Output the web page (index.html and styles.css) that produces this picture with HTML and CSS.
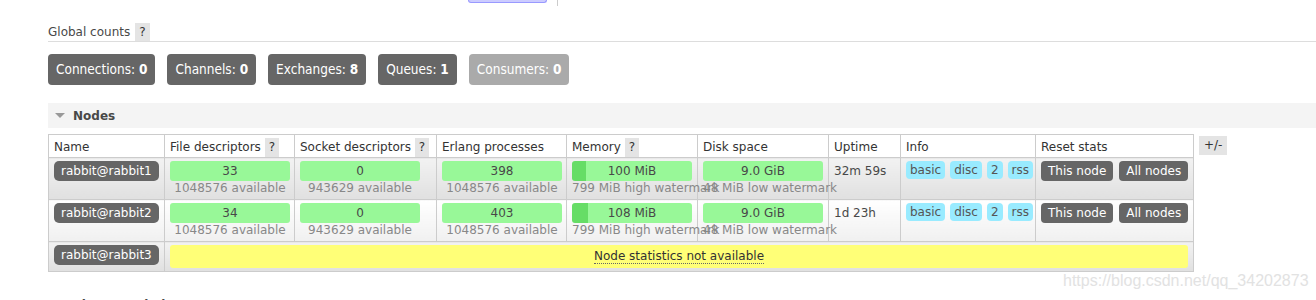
FILE: index.html
```html
<!DOCTYPE html>
<html lang="en">
<head>
    <meta charset="UTF-8">
    <title>RabbitMQ Management - Overview</title>
    <link rel="stylesheet" href="styles.css">
</head>
<body>
    <div class="topbar">
        <span class="tab-edge"></span>
        <span class="divider"></span>
    </div>

    <div class="main">
        <h3 class="counts-title">Global counts <span class="help">?</span></h3>
        <ul class="counts">
            <li>Connections: <b>0</b></li>
            <li>Channels: <b>0</b></li>
            <li>Exchanges: <b>8</b></li>
            <li>Queues: <b>1</b></li>
            <li class="off">Consumers: <b>0</b></li>
        </ul>

        <h2 class="section-head"><span class="arrow"></span>Nodes</h2>
        <div class="table-wrap">
            <table class="list">
                <colgroup>
                    <col style="width: 116px">
                    <col style="width: 130px">
                    <col style="width: 142px">
                    <col style="width: 130px">
                    <col style="width: 131px">
                    <col style="width: 131px">
                    <col style="width: 72px">
                    <col style="width: 135px">
                    <col style="width: 158px">
                </colgroup>
                <thead>
                    <tr>
                        <th>Name</th>
                        <th>File descriptors <span class="help">?</span></th>
                        <th>Socket descriptors <span class="help">?</span></th>
                        <th>Erlang processes</th>
                        <th>Memory <span class="help">?</span></th>
                        <th>Disk space</th>
                        <th>Uptime</th>
                        <th>Info</th>
                        <th>Reset stats</th>
                    </tr>
                </thead>
                <tbody>
                    <tr class="alt1">
                        <td><span class="node">rabbit@rabbit1</span></td>
                        <td><div class="stat"><div class="bar">33</div><span class="sub">1048576 available</span></div></td>
                        <td><div class="stat"><div class="bar">0</div><span class="sub">943629 available</span></div></td>
                        <td><div class="stat"><div class="bar">398</div><span class="sub">1048576 available</span></div></td>
                        <td><div class="stat"><div class="bar used" style="--used: 12%">100 MiB</div><span class="sub">799 MiB high watermark</span></div></td>
                        <td><div class="stat"><div class="bar">9.0 GiB</div><span class="sub">48 MiB low watermark</span></div></td>
                        <td class="uptime">32m 59s</td>
                        <td><div class="tags"><span>basic</span><span>disc</span><span>2</span><span>rss</span></div></td>
                        <td><div class="buttons"><span class="btn">This node</span><span class="btn">All nodes</span></div></td>
                    </tr>
                    <tr class="alt2">
                        <td><span class="node">rabbit@rabbit2</span></td>
                        <td><div class="stat"><div class="bar">34</div><span class="sub">1048576 available</span></div></td>
                        <td><div class="stat"><div class="bar">0</div><span class="sub">943629 available</span></div></td>
                        <td><div class="stat"><div class="bar">403</div><span class="sub">1048576 available</span></div></td>
                        <td><div class="stat"><div class="bar used" style="--used: 13.5%">108 MiB</div><span class="sub">799 MiB high watermark</span></div></td>
                        <td><div class="stat"><div class="bar">9.0 GiB</div><span class="sub">48 MiB low watermark</span></div></td>
                        <td class="uptime">1d 23h</td>
                        <td><div class="tags"><span>basic</span><span>disc</span><span>2</span><span>rss</span></div></td>
                        <td><div class="buttons"><span class="btn">This node</span><span class="btn">All nodes</span></div></td>
                    </tr>
                    <tr class="alt1">
                        <td><span class="node">rabbit@rabbit3</span></td>
                        <td colspan="8"><div class="unavailable"><abbr>Node statistics not available</abbr></div></td>
                    </tr>
                </tbody>
            </table>
            <span class="help toggle">+/-</span>
        </div>

        <h2 class="section-head closed"><span class="arrow"></span>Churn statistics</h2>
    </div>

    <div class="watermark">https://blog.csdn.net/qq_34202873</div>
</body>
</html>
```

FILE: styles.css
```css
body {
    margin: 0;
    font-family: "DejaVu Sans", Verdana, sans-serif;
    font-size: 12px;
    color: #484848;
    background: #fff;
}

/* bottom edge of the tab bar above */
.topbar {
    display: flex;
    align-items: flex-start;
    height: 6px;
    padding-left: 468px;
}

.topbar .tab-edge {
    width: 77px;
    height: 2px;
    background: #ccccff;
    border: 1px solid #9999ff;
    border-top: none;
    border-radius: 0 0 3px 3px;
}

.topbar .divider {
    width: 1px;
    height: 6px;
    margin-left: 10px;
    background: #ccc;
}

.main {
    padding-left: 48px;
}

.help {
    display: inline-block;
    padding: 0 4px;
    line-height: 19px;
    background: #e4e4e4;
    color: #333;
    font-weight: normal;
}

.counts-title {
    display: flex;
    align-items: center;
    gap: 5px;
    height: 19px;
    margin: 16px 0 0;
    font-size: 12px;
    font-weight: normal;
    border-bottom: 1px solid #ddd;
}

.counts-title .help {
    line-height: 18px;
}

.counts {
    display: flex;
    gap: 12px;
    list-style: none;
    margin: 12px 0 0;
    padding: 0;
}

.counts li {
    height: 31px;
    line-height: 31px;
    padding: 0 8px;
    background: #666;
    color: #fff;
    border-radius: 4px;
    font-family: "DejaVu Sans Condensed", "DejaVu Sans", sans-serif;
    font-stretch: condensed;
    font-size: 13.5px;
}

.counts li.off {
    background: #aaa;
}

.section-head {
    display: flex;
    align-items: center;
    gap: 8px;
    height: 25px;
    margin: 18px 0 0;
    padding-left: 7px;
    background: #f4f4f4;
    font-size: 12px;
    font-weight: bold;
    color: #484848;
}

.section-head .arrow {
    width: 0;
    height: 0;
    border-left: 5px solid transparent;
    border-right: 5px solid transparent;
    border-top: 5px solid #999;
}

.section-head.closed {
    margin-top: 20px;
    padding-left: 10px;
    gap: 10px;
    background: #fff;
}

.section-head.closed .arrow {
    border-top: 5px solid transparent;
    border-bottom: 5px solid transparent;
    border-left: 5px solid #999;
    border-right: none;
}

.table-wrap {
    display: flex;
    align-items: flex-start;
    gap: 5px;
    margin-top: 6px;
}

.table-wrap .toggle {
    margin-top: 2px;
    padding: 0 5px;
}

.list {
    border-collapse: collapse;
    table-layout: fixed;
    width: 1146px;
}

.list th,
.list td {
    border: 1px solid #ccc;
    padding: 3px 5px;
    text-align: left;
    vertical-align: top;
    white-space: nowrap;
}

.list th {
    padding: 2px 5px 0;
    line-height: 20px;
    font-weight: normal;
    color: #333;
    background: #fff;
}

.list tr.alt1 td {
    background: linear-gradient(#f2f2f2, #e0e0e0);
}

.list tr.alt2 td {
    background: linear-gradient(#fff, #f0f0f0);
}

.node {
    display: inline-block;
    padding: 0 7px;
    line-height: 20px;
    background: #666;
    color: #fff;
    border-radius: 5px;
}

.stat {
    width: 120px;
    text-align: center;
}

.bar {
    height: 20px;
    line-height: 20px;
    background: #98f898;
    border-radius: 3px;
}

.bar.used {
    background: linear-gradient(to right, #66dd66 var(--used), #98f898 var(--used));
}

.sub {
    display: block;
    line-height: 15px;
    color: #888;
}

.uptime {
    line-height: 20px;
}

.tags {
    display: flex;
    gap: 5px;
}

.tags span {
    padding: 0 4px;
    line-height: 18px;
    background: #99ebff;
    color: #555;
    border-radius: 4px;
}

.buttons {
    display: flex;
    gap: 6px;
}

.btn {
    flex-shrink: 0;
    padding: 0 7px;
    line-height: 20px;
    background: #666;
    color: #fff;
    border-radius: 4px;
}

.unavailable {
    height: 23px;
    line-height: 23px;
    text-align: center;
    background: #ffff77;
    border-radius: 3px;
    color: #333;
}

.unavailable abbr {
    text-decoration: none;
    border-bottom: 1px dotted #666;
}

.watermark {
    position: absolute;
    left: 1063px;
    top: 271px;
    font-family: "Liberation Sans", Arial, sans-serif;
    font-size: 16px;
    line-height: 20px;
    color: #e2e2e2;
}
```
